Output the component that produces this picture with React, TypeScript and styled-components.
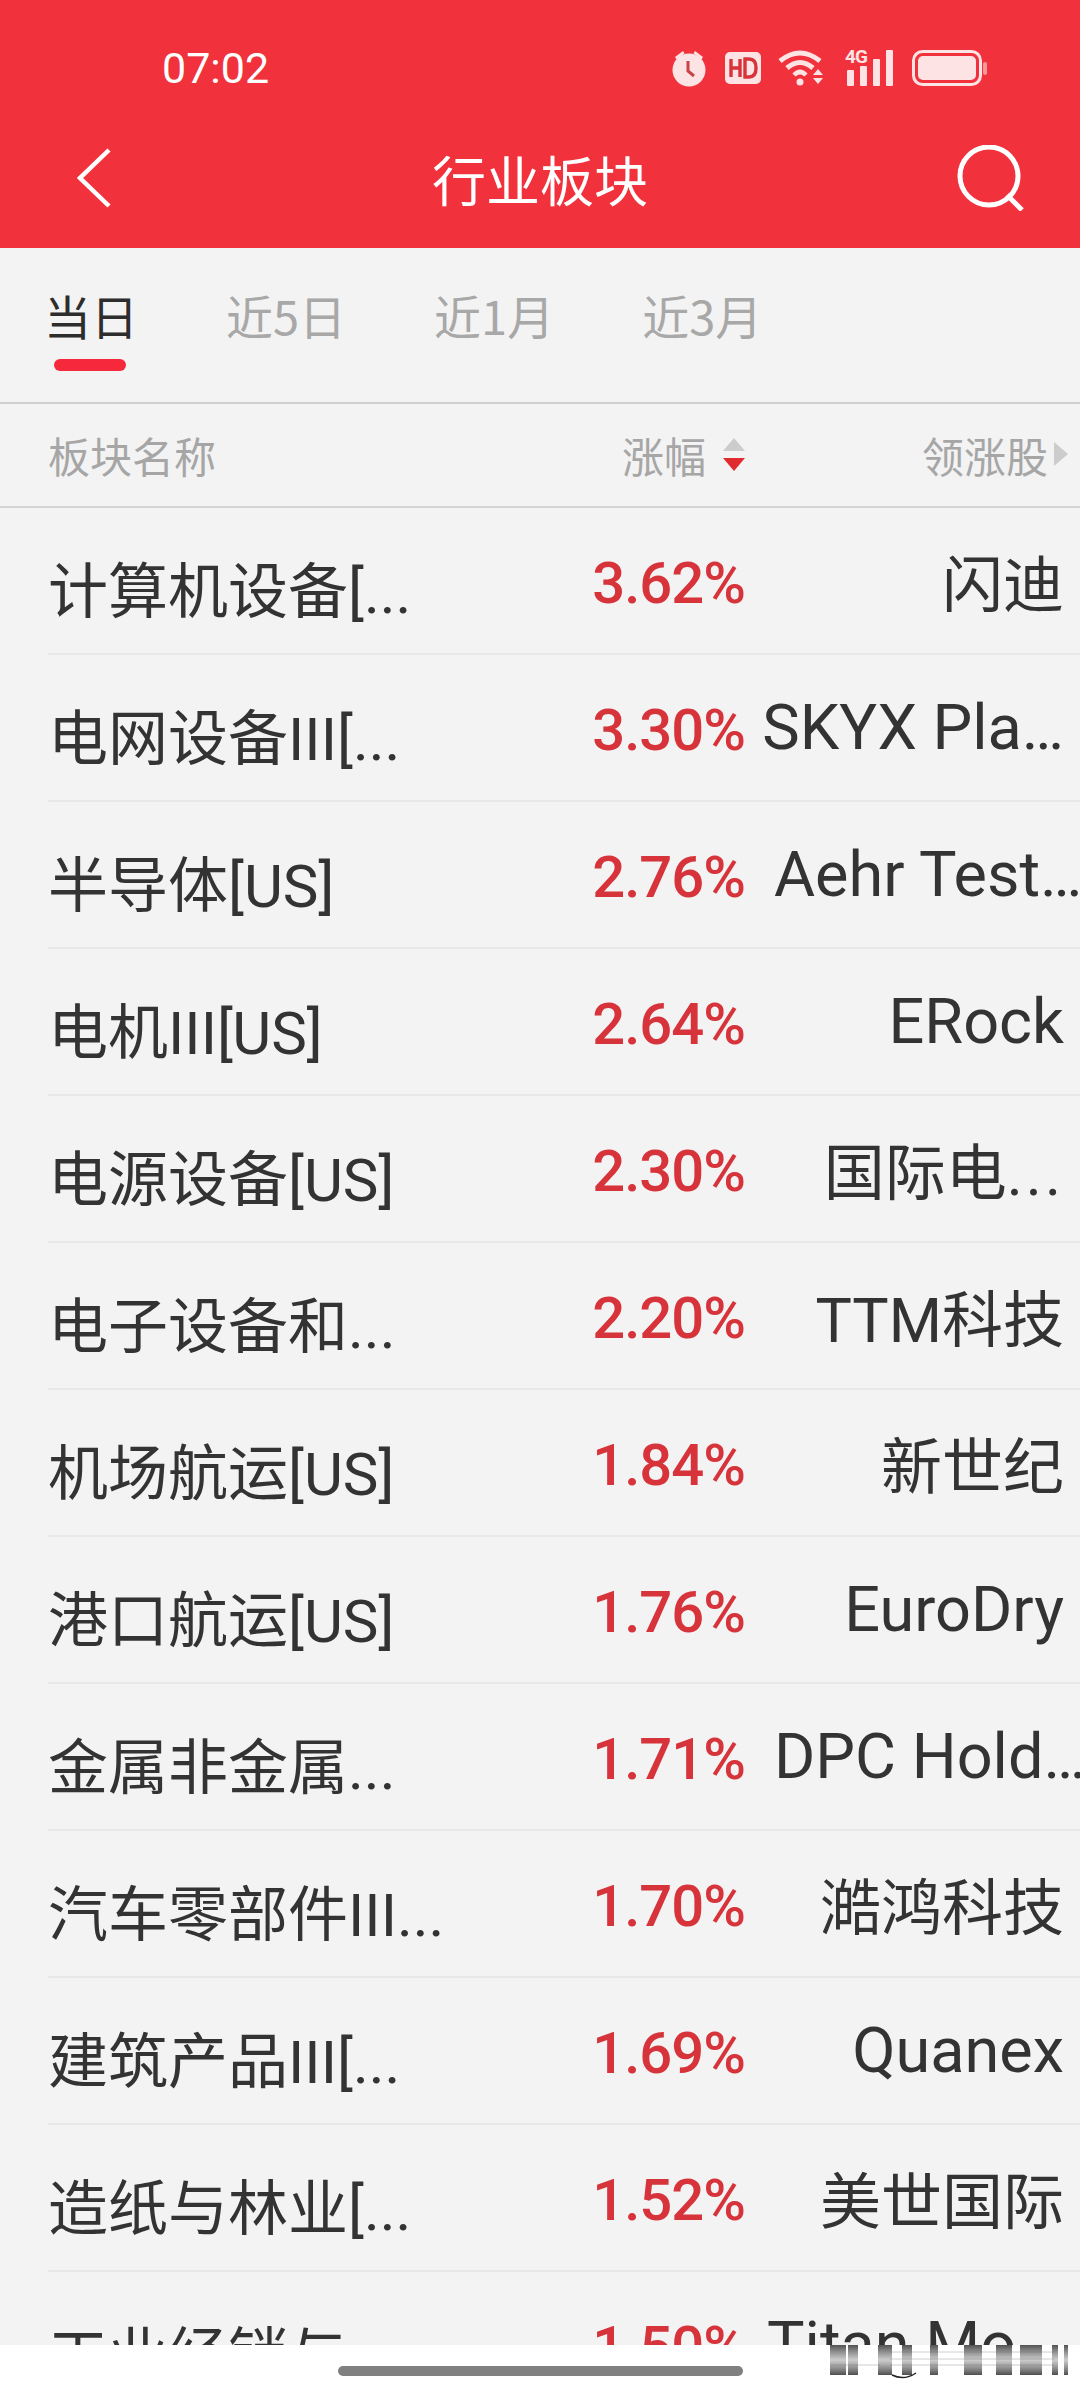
import React from 'react';
import styled, { createGlobalStyle } from 'styled-components';

const rows = [
	{ name: '计算机设备[', pct: '3.62%', stock: '闪迪', cjk: true },
	{ name: '电网设备III[', pct: '3.30%', stock: 'SKYX Pla…' },
	{ name: '半导体[US]', pct: '2.76%', stock: 'Aehr Test…', inset: 29, full: true },
	{ name: '电机III[US]', pct: '2.64%', stock: 'ERock', full: true },
	{ name: '电源设备[US]', pct: '2.30%', stock: '国际电', cjk: true, cut: true, full: true },
	{ name: '电子设备和', pct: '2.20%', stock: 'TTM科技', cjk: true },
	{ name: '机场航运[US]', pct: '1.84%', stock: '新世纪', cjk: true, full: true },
	{ name: '港口航运[US]', pct: '1.76%', stock: 'EuroDry', full: true },
	{ name: '金属非金属', pct: '1.71%', stock: 'DPC Hold…', inset: 29 },
	{ name: '汽车零部件III', pct: '1.70%', stock: '澔鸿科技', cjk: true },
	{ name: '建筑产品III[', pct: '1.69%', stock: 'Quanex' },
	{ name: '造纸与林业[', pct: '1.52%', stock: '美世国际', cjk: true },
	{ name: '工业经销与', pct: '1.50%', stock: 'Titan Mo…', inset: 22 },
];

const tabs = ['当日', '近5日', '近1月', '近3月'];

// smeared leftovers of the last row, drawn over the home bar
const smearBars = [
	[0, 16], [18, 10], [48, 14], [72, 10], [100, 8], [134, 18], [166, 16], [190, 22], [222, 6], [234, 4],
];

export default function App() {
	return (
		<Page>
			<GlobalStyle />
			<Header>
				<StatusBar>
					<Clock>07:02</Clock>
					<StatusIcons>
						<svg width="38" height="40" viewBox="0 0 38 40" fill="#fde3e3">
							<circle cx="19" cy="22" r="16.5" />
							<path d="M5 9 L13 3 L14.5 5.5 L6.5 11.5Z M33 9 L25 3 L23.5 5.5 L31.5 11.5Z" />
							<path d="M18 13 V23 L24 28" fill="none" stroke="#c9434b" strokeWidth="3" />
						</svg>
						<svg width="36" height="32" viewBox="0 0 36 32">
							<rect width="36" height="32" rx="5" fill="#fde3e3" />
							<path d="M6 7 V25 M6 16 H15 M15 7 V25" fill="none" stroke="#d8333c" strokeWidth="3.4" />
							<path d="M20 7 V25 H24 Q31 25 31 16 Q31 7 24 7Z" fill="none" stroke="#d8333c" strokeWidth="3.4" />
						</svg>
						<svg width="50" height="36" viewBox="0 0 50 36" fill="none">
							<path d="M2 11 Q22 -5 42 11" stroke="#fde3e3" strokeWidth="5" />
							<path d="M9 18 Q22 7 35 18" stroke="#fde3e3" strokeWidth="5" />
							<path d="M16 25 Q22 19 28 25" stroke="#fde3e3" strokeWidth="4.5" />
							<circle cx="22" cy="32" r="3.5" fill="#fde3e3" />
							<path d="M40 19 L45 25 H35Z M35 28 H45 L40 34Z" fill="#fde3e3" />
						</svg>
						<SignalGroup>
							<SignalLabel>4G</SignalLabel>
							<svg width="48" height="36" viewBox="0 0 48 36" fill="#fde3e3">
								<rect x="2" y="20" width="7" height="16" rx="1" />
								<rect x="15" y="16" width="7" height="20" rx="1" />
								<rect x="28" y="9" width="7" height="27" rx="1" />
								<rect x="41" y="0" width="7" height="36" rx="1" />
							</svg>
						</SignalGroup>
						<svg width="76" height="36" viewBox="0 0 76 36" fill="none">
							<rect x="1.5" y="1.5" width="67" height="33" rx="9" stroke="#fde3e3" strokeWidth="3" />
							<rect x="6" y="6" width="58" height="24" rx="5" fill="#fde3e3" />
							<rect x="71" y="12" width="4" height="13" rx="2" fill="#f39a9a" />
						</svg>
					</StatusIcons>
				</StatusBar>
				<NavBar>
					<BackIcon width="38" height="62" viewBox="0 0 38 62" fill="none">
						<path d="M34 3 L5 31 L34 59" stroke="#fff" strokeWidth="4.5" />
					</BackIcon>
					<NavTitle>行业板块</NavTitle>
					<SearchIcon width="70" height="66" viewBox="0 0 70 66" fill="none">
						<circle cx="33" cy="31" r="29" stroke="#fff" strokeWidth="5" />
						<path d="M51 50 L66 65" stroke="#fff" strokeWidth="5" />
					</SearchIcon>
				</NavBar>
			</Header>
			<TabBar>
				{tabs.map((t, i) => (
					<Tab key={t} $active={i === 0}>{t}</Tab>
				))}
			</TabBar>
			<TableHead>
				<HeadName>板块名称</HeadName>
				<HeadPct>
					涨幅
					<SortArrows>
						<ArrowUp />
						<ArrowDown />
					</SortArrows>
				</HeadPct>
				<HeadStock>
					领涨股
					<ArrowRight />
				</HeadStock>
			</TableHead>
			<List>
				{rows.map(r => (
					<Row key={r.name}>
						<Name>
							{r.name}
							{!r.full && '...'}
						</Name>
						<Pct>{r.pct}</Pct>
						<Stock $inset={r.inset} $cjk={r.cjk}>
							{r.stock}
							{r.cut && <StockDots>...</StockDots>}
						</Stock>
					</Row>
				))}
			</List>
			<HomeArea>
				<HomePill />
				<Smear width="240" height="40" viewBox="0 0 240 40">
					<defs>
						<linearGradient id="smearFade" x1="0" y1="0" x2="0" y2="1">
							<stop offset="0" stopColor="#333" stopOpacity="0.85" />
							<stop offset="0.5" stopColor="#555" stopOpacity="0.3" />
							<stop offset="1" stopColor="#222" stopOpacity="0.8" />
						</linearGradient>
					</defs>
					{smearBars.map(([x, w]) => (
						<rect key={x} x={x} y="0" width={w} height="30" fill="url(#smearFade)" />
					))}
					<path d="M0 20 H50 M60 7 H224 M60 14 H224 M60 20 H224" stroke="#777" strokeWidth="1" opacity="0.35" />
					<path d="M62 30 Q74 36 86 28" stroke="#222" strokeWidth="1.5" fill="none" />
				</Smear>
			</HomeArea>
		</Page>
	);
}

const GlobalStyle = createGlobalStyle`
	html, body {
		margin: 0;
		padding: 0;
		background: #f3f3f3;
	}
`;

const Page = styled.div`
	width: 1080px;
	height: 2400px;
	display: flex;
	flex-direction: column;
	overflow: hidden;
	background: #f3f3f3;
	font-family: "Noto Sans CJK SC", "Liberation Sans", sans-serif;
`;

const Header = styled.header`
	height: 248px;
	flex: none;
	background: #f1323c;
	display: flex;
	flex-direction: column;
`;

const StatusBar = styled.div`
	height: 136px;
	padding: 0 92px 0 162px;
	display: flex;
	align-items: center;
	justify-content: space-between;
`;

const Clock = styled.span`
	font-family: "Roboto", sans-serif;
	font-size: 43px;
	color: #fff;
`;

const StatusIcons = styled.div`
	display: flex;
	align-items: center;
	gap: 17px;
`;

const SignalGroup = styled.div`
	position: relative;
	width: 50px;
	height: 36px;
`;

const SignalLabel = styled.span`
	position: absolute;
	left: 0;
	top: -5px;
	font-family: "Roboto", sans-serif;
	font-size: 19px;
	font-weight: 700;
	color: #fde3e3;
	letter-spacing: -1px;
`;

const NavBar = styled.div`
	flex: 1;
	padding: 0 54px 28px;
	display: grid;
	grid-template-columns: 1fr auto 1fr;
	align-items: center;
`;

const BackIcon = styled.svg`
	margin-left: 21px;
`;

const NavTitle = styled.h1`
	margin: 0;
	font-size: 54px;
	font-weight: 400;
	color: #fff;
`;

const SearchIcon = styled.svg`
	justify-self: end;
`;

const TabBar = styled.nav`
	height: 156px;
	flex: none;
	padding-left: 44px;
	display: flex;
	gap: 88px;
	border-bottom: 2px solid #cfcfcf;
	box-sizing: border-box;
`;

const Tab = styled.div<{ $active?: boolean }>`
	position: relative;
	padding-top: 32px;
	font-size: 47px;
	line-height: 70px;
	color: ${p => (p.$active ? '#2d2d2d' : '#a8a8a8')};

	&::after {
		content: '';
		display: ${p => (p.$active ? 'block' : 'none')};
		position: absolute;
		left: 10px;
		top: 111px;
		width: 72px;
		height: 12px;
		border-radius: 6px;
		background: #f5283c;
	}
`;

const TableHead = styled.div`
	height: 104px;
	flex: none;
	padding: 0 0 2px 48px;
	display: flex;
	align-items: center;
	border-bottom: 2px solid #d4d4d4;
	box-sizing: border-box;
	font-size: 42px;
	color: #a6a6a6;
`;

const HeadName = styled.div`
	width: 574px;
`;

const HeadPct = styled.div`
	width: 124px;
	display: flex;
	align-items: center;
	gap: 17px;
`;

const SortArrows = styled.div`
	display: flex;
	flex-direction: column;
	gap: 7px;
`;

const ArrowUp = styled.i`
	width: 0;
	height: 0;
	border-left: 11px solid transparent;
	border-right: 11px solid transparent;
	border-bottom: 13px solid #cccccc;
`;

const ArrowDown = styled.i`
	width: 0;
	height: 0;
	border-left: 11px solid transparent;
	border-right: 11px solid transparent;
	border-top: 13px solid #e02b30;
`;

const HeadStock = styled.div`
	margin-left: auto;
	padding-right: 12px;
	display: flex;
	align-items: center;
	gap: 6px;
`;

const ArrowRight = styled.i`
	width: 0;
	height: 0;
	border-top: 12px solid transparent;
	border-bottom: 12px solid transparent;
	border-left: 14px solid #cccccc;
`;

const List = styled.div`
	flex: 1;
	min-height: 0;
	overflow: hidden;
	padding-left: 48px;
`;

const Row = styled.div`
	height: 147px;
	box-sizing: border-box;
	display: flex;
	align-items: center;
	border-bottom: 2px solid #e8e8e8;
	white-space: nowrap;
`;

const Name = styled.div`
	width: 480px;
	padding-top: 12px;
	font-family: "Roboto", "Noto Sans CJK SC", sans-serif;
	font-size: 60px;
	color: #333;
`;

const Pct = styled.div`
	width: 217px;
	padding-top: 4px;
	text-align: right;
	font-family: "Roboto", sans-serif;
	font-size: 58px;
	font-weight: 500;
	letter-spacing: -1px;
	color: #d7333a;
`;

const Stock = styled.div<{ $inset?: number; $cjk?: boolean }>`
	flex: 1;
	min-width: 0;
	text-align: ${p => (p.$inset ? 'left' : 'right')};
	padding-left: ${p => p.$inset ?? 0}px;
	padding-right: ${p => (p.$inset ? '0' : '16px')};
	font-family: "Roboto", "Noto Sans CJK SC", sans-serif;
	font-size: ${p => (p.$cjk ? '61px' : '63px')};
	color: #333;
`;

const StockDots = styled.span`
	letter-spacing: 3px;
`;

const HomeArea = styled.div`
	position: relative;
	height: 55px;
	flex: none;
	background: #fff;
	display: flex;
	justify-content: center;
	padding-top: 21px;
	box-sizing: border-box;
`;

const HomePill = styled.div`
	width: 405px;
	height: 10px;
	border-radius: 5px;
	background: #808080;
`;

const Smear = styled.svg`
	position: absolute;
	left: 830px;
	top: 0;
`;
